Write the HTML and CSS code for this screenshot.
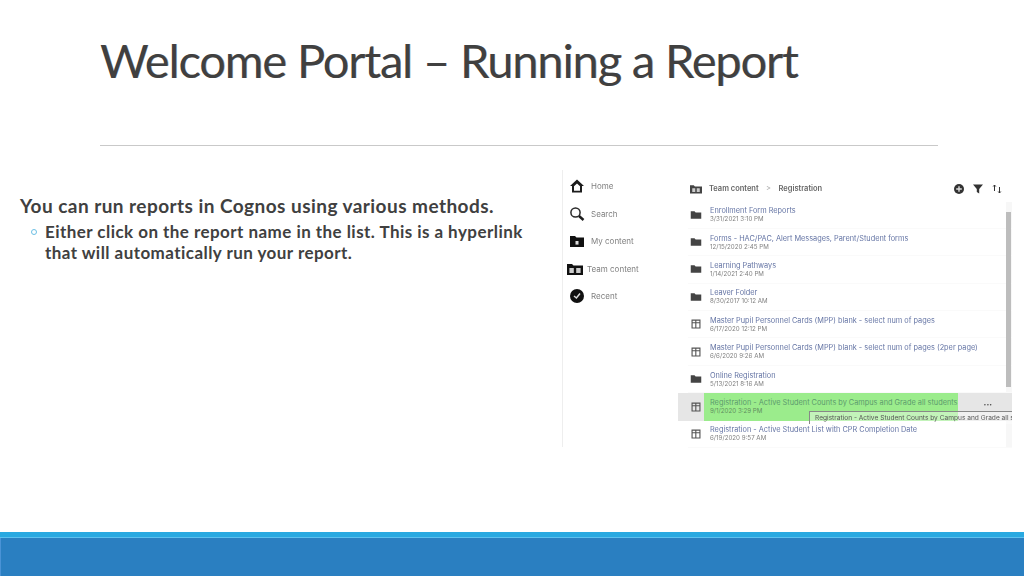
FILE: index.html
```html
<!DOCTYPE html>
<html lang="en">
<head>
  <meta charset="UTF-8" />
  <title>Welcome Portal - Running a Report</title>
  <link rel="stylesheet" href="styles.css">
</head>
<body>
  <header class="slide-header">
    <h1>Welcome Portal – Running a Report</h1>
  </header>

  <main class="slide-body">
    <section class="copy">
      <p class="lead">You can run reports in Cognos using various methods.</p>
      <ul>
        <li>Either click on the report name in the list. This is a hyperlink that will automatically run your report.</li>
      </ul>
    </section>

    <section class="shot">
      <nav class="side">
        <div class="side-item">
          <svg viewBox="0 0 16 16"><path d="M8 1.500 1 8h2v6.500h10V8h2zM5 8.200 8 5.400l3 2.800v4.600H5z" fill="#1d1d1d"/></svg>
          <span>Home</span>
        </div>
        <div class="side-item">
          <svg viewBox="0 0 16 16"><circle cx="6.500" cy="6.500" r="4.600" fill="none" stroke="#2a2a2a" stroke-width="1.500"/><path d="M10 10l4.500 4" stroke="#1d1d1d" stroke-width="2.400"/></svg>
          <span>Search</span>
        </div>
        <div class="side-item">
          <svg viewBox="0 0 16 16"><path d="M1 3h5l1.500 1.500H15V14H1z" fill="#111"/><rect x="6.500" y="8" width="3" height="3.600" fill="#ddd"/></svg>
          <span>My content</span>
        </div>
        <div class="side-item team">
          <svg viewBox="0 0 16 16"><path d="M0 3h5l1.500 1.500H16V14H0z" fill="#111"/><rect x="2.400" y="7" width="4.400" height="5" fill="#ccc"/><rect x="9.200" y="7" width="4.400" height="5" fill="#ccc"/></svg>
          <span>Team content</span>
        </div>
        <div class="side-item">
          <svg viewBox="0 0 16 16"><circle cx="8" cy="8" r="7" fill="#111"/><path d="M5 8l2.400 2L11 5.500" fill="none" stroke="#ddd" stroke-width="1.500"/></svg>
          <span>Recent</span>
        </div>
      </nav>

      <div class="content">
        <div class="crumbs">
          <svg class="row-icon" viewBox="0 0 16 16"><path d="M0 3h5l1.500 1.500H16V14H0z" fill="#444"/><rect x="3" y="7" width="4" height="5" fill="#ccc"/><rect x="9" y="7" width="4" height="5" fill="#ccc"/></svg>
          <b>Team content</b>
          <i>&gt;</i>
          <b>Registration</b>
          <div class="tools">
            <svg viewBox="0 0 12 12"><circle cx="6" cy="6" r="5" fill="#333"/><path d="M6 3.200v5.600M3.200 6h5.600" stroke="#ddd" stroke-width="1.400"/></svg>
            <svg viewBox="0 0 12 12"><path d="M1 1.500h10L7.200 6v4.500L4.800 9V6z" fill="#333"/></svg>
            <svg viewBox="0 0 12 12"><path d="M3.500 8V2M2.200 3.500 3.500 2l1.300 1.500M8.500 4v6M7.200 8.500l1.300 1.500 1.300-1.500" fill="none" stroke="#333" stroke-width="1"/></svg>
          </div>
        </div>

        <div class="rows">
          <div class="row">
            <svg class="row-icon" viewBox="0 0 16 16"><path d="M1 3h5l1.500 1.500H15V13H1z" fill="#444"/></svg>
            <div><a>Enrollment Form Reports</a><small>3/31/2021 3:10 PM</small></div>
          </div>
          <div class="row">
            <svg class="row-icon" viewBox="0 0 16 16"><path d="M1 3h5l1.500 1.500H15V13H1z" fill="#444"/></svg>
            <div><a>Forms - HAC/PAC, Alert Messages, Parent/Student forms</a><small>12/15/2020 2:45 PM</small></div>
          </div>
          <div class="row">
            <svg class="row-icon" viewBox="0 0 16 16"><path d="M1 3h5l1.500 1.500H15V13H1z" fill="#444"/></svg>
            <div><a>Learning Pathways</a><small>1/14/2021 2:40 PM</small></div>
          </div>
          <div class="row">
            <svg class="row-icon" viewBox="0 0 16 16"><path d="M1 3h5l1.500 1.500H15V13H1z" fill="#444"/></svg>
            <div><a>Leaver Folder</a><small>8/30/2017 10:12 AM</small></div>
          </div>
          <div class="row">
            <svg class="row-icon" viewBox="0 0 16 16"><path d="M2 2h12v12H2zM3.500 3.500v2h3.500v-2zM8.500 3.500v2h4v-2zM3.500 7v5.500h3.500V7zM8.500 7v5.500h4V7z" fill="#555" fill-rule="evenodd"/></svg>
            <div><a>Master Pupil Personnel Cards (MPP) blank - select num of pages</a><small>6/17/2020 12:12 PM</small></div>
          </div>
          <div class="row">
            <svg class="row-icon" viewBox="0 0 16 16"><path d="M2 2h12v12H2zM3.500 3.500v2h3.500v-2zM8.500 3.500v2h4v-2zM3.500 7v5.500h3.500V7zM8.500 7v5.500h4V7z" fill="#555" fill-rule="evenodd"/></svg>
            <div><a>Master Pupil Personnel Cards (MPP) blank - select num of pages (2per page)</a><small>6/6/2020 9:26 AM</small></div>
          </div>
          <div class="row">
            <svg class="row-icon" viewBox="0 0 16 16"><path d="M1 3h5l1.500 1.500H15V13H1z" fill="#444"/></svg>
            <div><a>Online Registration</a><small>5/13/2021 8:16 AM</small></div>
          </div>
          <div class="row active">
            <svg class="row-icon" viewBox="0 0 16 16"><path d="M2 2h12v12H2zM3.500 3.500v2h3.500v-2zM8.500 3.500v2h4v-2zM3.500 7v5.500h3.500V7zM8.500 7v5.500h4V7z" fill="#555" fill-rule="evenodd"/></svg>
            <div class="marked"><a>Registration - Active Student Counts by Campus and Grade all students</a><small>9/1/2020 3:29 PM</small></div>
            <span class="dots">•••</span>
            <div class="tip">Registration - Active Student Counts by Campus and Grade all students</div>
          </div>
          <div class="row">
            <svg class="row-icon" viewBox="0 0 16 16"><path d="M2 2h12v12H2zM3.500 3.500v2h3.500v-2zM8.500 3.500v2h4v-2zM3.500 7v5.500h3.500V7zM8.500 7v5.500h4V7z" fill="#555" fill-rule="evenodd"/></svg>
            <div><a>Registration - Active Student List with CPR Completion Date</a><small>6/19/2020 9:57 AM</small></div>
          </div>
          <div class="scrollbar"></div>
        </div>
      </div>
    </section>
  </main>

  <footer class="slide-footer"></footer>
</body>
</html>
```

FILE: styles.css
```css
* {
  box-sizing: border-box;
  margin: 0;
  padding: 0;
}

body {
  width: 1024px;
  height: 576px;
  overflow: hidden;
  display: flex;
  flex-direction: column;
  background: #fff;
  font-family: 'Lato', 'Open Sans', sans-serif;
  color: #404040;
}

.slide-header {
  height: 146px;
  margin: 0 86px 0 100px;
  padding-top: 33px;
  border-bottom: 1px solid #c9c9c9;
}

.slide-header h1 {
  font-size: 47px;
  font-weight: 400;
  line-height: 54px;
  letter-spacing: -1.15px;
  color: #404040;
  text-shadow: 0.6px 0 0 rgba(64,64,64,0.4);
  white-space: nowrap;
}

.slide-body {
  flex: 1;
  display: flex;
  align-items: flex-start;
  padding-top: 24px;
}

.copy {
  width: 562px;
  padding: 25px 25px 0 20px;
  font-weight: 700;
}

.lead {
  font-size: 19px;
  line-height: 22px;
  letter-spacing: 0.45px;
}

.copy ul {
  list-style: none;
  margin-top: 4px;
}

.copy li {
  position: relative;
  padding-left: 25px;
  font-size: 17px;
  line-height: 21px;
  letter-spacing: 0.45px;
}

.copy li::before {
  content: "";
  position: absolute;
  left: 11px;
  top: 8px;
  width: 4px;
  height: 4px;
  border: 1px solid #6cbfe4;
  border-radius: 50%;
}

.shot {
  width: 450px;
  height: 277px;
  display: flex;
  border-left: 1px solid #eeeeee;
  filter: blur(0.7px);
  font-family: 'Inter', sans-serif;
}

.side {
  width: 125px;
  display: flex;
  flex-direction: column;
  gap: 11.5px;
  padding: 8px 0 0 6px;
  font-size: 8px;
  color: #808080;
}

.side-item {
  display: flex;
  align-items: center;
  gap: 6px;
  height: 16px;
}

.side-item svg {
  width: 16px;
  height: 16px;
}

.side-item.team svg {
  margin-left: -2px;
}

.side-item.team {
  gap: 4px;
}

.content {
  flex: 1;
  min-width: 0;
}

.crumbs {
  display: flex;
  align-items: center;
  height: 31.5px;
  padding: 6px 0 0 2px;
  font-size: 7.5px;
  color: #666;
}

.crumbs b {
  font-weight: 600;
}

.crumbs i {
  margin: 0 7.5px;
  font-style: normal;
  color: #aaa;
}

.crumbs .row-icon {
  margin-right: 7px;
}

.tools {
  margin-left: auto;
  margin-right: 9px;
  display: flex;
  gap: 7px;
}

.tools svg {
  width: 12px;
  height: 12px;
}

.rows {
  position: relative;
  height: 246px;
  background: linear-gradient(to left, #f7f7f7 6px, transparent 6px);
}

.row {
  position: relative;
  display: flex;
  align-items: center;
  height: 27.4px;
  padding-left: 2px;
  white-space: nowrap;
  border-bottom: 1px solid #fafafa;
}

.row-icon {
  flex: none;
  width: 12px;
  height: 12px;
  margin-right: 8px;
}

.row a {
  display: block;
  font-size: 7.35px;
  line-height: 9px;
  color: #6474a4;
}

.row small {
  display: block;
  font-size: 6.2px;
  line-height: 8px;
  color: #808080;
}

.row.active {
  background: #e6e6e6;
  margin-left: -10px;
  padding-left: 12px;
  border-bottom: 0;
}

.marked {
  align-self: stretch;
  display: flex;
  flex-direction: column;
  justify-content: center;
  width: 254px;
  margin-left: -6px;
  padding-left: 6px;
  background: #9bec8c;
}

.marked a {
  color: #5c9a6c;
}

.marked small {
  color: #5f8f5f;
}

.dots {
  position: absolute;
  right: 20px;
  top: 8px;
  font-size: 5px;
  color: #444;
}

.tip {
  position: absolute;
  left: 131px;
  right: 0;
  top: 18px;
  height: 13px;
  overflow: hidden;
  padding-left: 5px;
  border: 1px solid #888;
  border-right: 0;
  border-bottom: 0;
  background: rgba(255,255,255,0.4);
  font-size: 6.6px;
  line-height: 12px;
  color: #555;
}

.scrollbar {
  position: absolute;
  right: 1px;
  top: 10px;
  width: 5px;
  height: 175px;
  background: #bdbdbd;
}

.slide-footer {
  height: 44px;
  background: #2a7fc1;
  border-top: 5px solid #29a9e1;
  box-shadow: inset 0 1px 0 #5cc1ef, inset 1px 0 0 #4a93d6;
}
```
